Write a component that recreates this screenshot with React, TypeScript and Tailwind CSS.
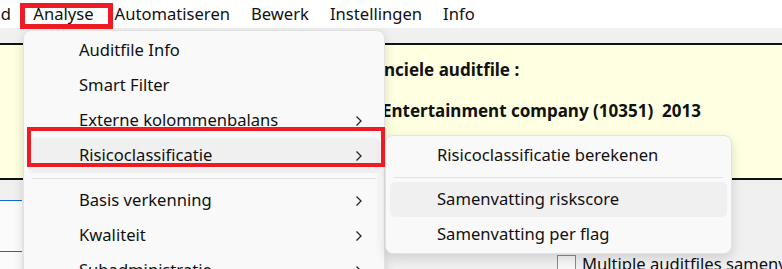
import { ReactNode } from "react";

function Chevron() {
	return (
		<svg width="8" height="12" viewBox="0 0 8 12" className="shrink-0">
			<path d="M1.5 1.5 L6 6 L1.5 10.5" fill="none" stroke="#262626" strokeWidth="1.3" />
		</svg>
	);
}

function MenuItem({
	label,
	sub,
	active,
	pad,
}: {
	label: string;
	sub?: boolean;
	active?: boolean;
	pad: string;
}) {
	return (
		<div
			className={
				"h-[35px] mx-[4px] rounded-[5px] flex items-center justify-between pr-[17px] " +
				pad +
				(active ? " bg-[#f0f0f0]" : "")
			}
		>
			<span>{label}</span>
			{sub && <Chevron />}
		</div>
	);
}

function Separator({ h }: { h: string }) {
	return (
		<div className={"flex items-center px-[8px] " + h}>
			<div className="h-px w-full bg-[#e2e2e2]" />
		</div>
	);
}

function BarItem({ children }: { children: ReactNode }) {
	return <span className="px-[10.5px]">{children}</span>;
}

export default function App() {
	const mainItems = [
		{ label: "Auditfile Info" },
		{ label: "Smart Filter" },
		{ label: "Externe kolommenbalans", sub: true },
		{ label: "Risicoclassificatie", sub: true, active: true },
	];
	const lowerItems = [
		{ label: "Basis verkenning", sub: true },
		{ label: "Kwaliteit", sub: true },
		{ label: "Subadministratie", sub: true },
	];

	return (
		<div className="relative w-[782px] h-[269px] overflow-hidden bg-[#f0f0f0] text-[16.6px] text-[#111] font-['Noto_Sans',sans-serif]">
			{/* menu bar */}
			<div className="h-[28px] bg-white flex items-center whitespace-nowrap">
				<span className="-ml-[53px] pr-[12px]">Bestand</span>
				<BarItem>Analyse</BarItem>
				<BarItem>Automatiseren</BarItem>
				<BarItem>Bewerk</BarItem>
				<BarItem>Instellingen</BarItem>
				<BarItem>Info</BarItem>
			</div>
			<div className="h-[15px] bg-[#f0f0f0]" />

			{/* info panel */}
			<div className="h-[137px] bg-[#ffffe1] border-t-2 border-b-2 border-[#111] font-bold text-[17px] leading-[24px] whitespace-pre">
				<div className="flex pt-[13px]">
					<div className="w-[384px] shrink-0 text-right overflow-hidden">Gegevens fina</div>
					<div>nciele auditfile :</div>
				</div>
				<div className="flex pt-[17px]">
					<div className="w-[382px] shrink-0 text-right overflow-hidden">Bedrijf: </div>
					<div>Entertainment company (10351)  2013</div>
				</div>
			</div>

			{/* lower area */}
			<div className="flex">
				<div className="w-[22px] shrink-0 pt-[20px]">
					<div className="h-[52px] bg-[#fbfbfb] border-t border-b border-[#0a6ed1]" />
					<div className="h-[40px] bg-[#fbfbfb]" />
				</div>
				<div className="pl-[535px] pt-[75px] flex items-start gap-[6px] whitespace-nowrap">
					<div className="w-[19px] h-[19px] shrink-0 border border-[#8a8a8a] bg-[#f7f7f7]" />
					<span className="leading-[18px]">Multiple auditfiles samenvoegen</span>
				</div>
			</div>

			{/* Analyse dropdown */}
			<div className="absolute left-[23px] top-[30px] w-[362px] h-[300px] rounded-[8px] bg-[#f9f9f9] border border-[#e3e3e3] shadow-[0_4px_12px_rgba(0,0,0,0.14)] pt-[2px]">
				{mainItems.map((it) => (
					<MenuItem key={it.label} {...it} pad="pl-[51px]" />
				))}
				<Separator h="h-[10px]" />
				{lowerItems.map((it) => (
					<MenuItem key={it.label} {...it} pad="pl-[51px]" />
				))}
			</div>

			{/* Risicoclassificatie submenu */}
			<div className="absolute left-[385px] top-[135px] w-[347px] rounded-[8px] bg-[#f9f9f9] border border-[#e3e3e3] shadow-[0_4px_12px_rgba(0,0,0,0.14)] pt-[2px] pb-[1px]">
				<MenuItem label="Risicoclassificatie berekenen" pad="pl-[47px]" />
				<Separator h="h-[9px]" />
				<MenuItem label="Samenvatting riskscore" active pad="pl-[47px]" />
				<MenuItem label="Samenvatting per flag" pad="pl-[47px]" />
			</div>

			{/* red annotation boxes */}
			<div className="absolute left-[20px] top-[3px] w-[93px] h-[26px] border-[5px] border-[#ed1c24]" />
			<div className="absolute left-[27px] top-[127px] w-[358px] h-[40px] border-[4px] border-[#ed1c24]" />
		</div>
	);
}
